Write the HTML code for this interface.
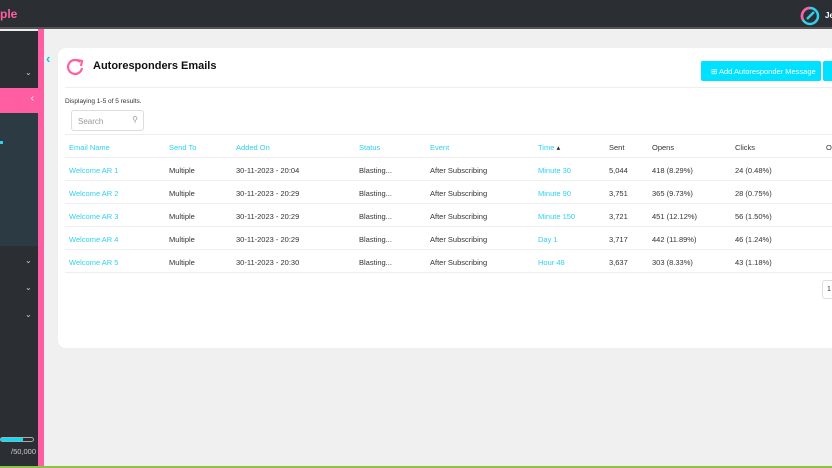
<html><head><style>
*{margin:0;padding:0;box-sizing:border-box}
body{width:832px;height:468px;overflow:hidden;background:#f0f0f0;font-family:"Liberation Sans",sans-serif;position:relative}
.top{position:absolute;left:0;top:0;width:832px;height:29px;background:#2b2e33;border-bottom:2px solid #555}
.logo{position:absolute;left:0;top:7px;color:#ff5fa2;font-weight:bold;font-size:12px}
.side{position:absolute;left:0;top:31px;width:38px;height:437px;background:#2b2e33}
.pinkstrip{position:absolute;left:38px;top:29px;width:6px;height:439px;background:#ff5fa2}
.prow{position:absolute;left:0;top:88px;width:44px;height:25px;background:#ff5fa2;color:#fff;font-size:10px;text-align:right;padding:5px 10px}
.sub{position:absolute;left:0;top:113px;width:38px;height:133px;background:#2c3a44}
.chev{position:absolute;left:25px;color:#ccc;font-size:8px}
.card{position:absolute;left:58px;top:48px;width:800px;height:300px;background:#fff;border-radius:8px}
h1{position:absolute;left:93px;top:60px;font-size:11px;font-weight:bold;color:#111}
.btn{position:absolute;left:701px;top:61px;width:120px;height:20px;background:#00e0ff;color:#fff;font-size:7.5px;border-radius:2px;padding:6px 0 0 10px;white-space:nowrap;overflow:hidden}
.btn2{position:absolute;left:823px;top:61px;width:20px;height:20px;background:#00e0ff;border-radius:2px}
.hr{position:absolute;left:65px;height:1px;background:#eee;width:767px}
.t{position:absolute;font-size:7.5px;color:#333;white-space:nowrap}
.b{color:#2fd0f0}
.srch{position:absolute;left:71px;top:110px;width:73px;height:21px;border:1px solid #ddd;border-radius:3px;font-size:8px;color:#999;padding:6px 0 0 6px}
</style></head><body>
<div class="top"><div class="logo">ple</div>
<svg style="position:absolute;left:800px;top:6px" width="20" height="20"><circle cx="10" cy="10" r="8" fill="none" stroke="#2fd0f0" stroke-width="2.5"/><path d="M3 14 A8 8 0 0 1 10 2" stroke="#ff5fa2" stroke-width="2.5" fill="none"/><path d="M7 13 L14 6" stroke="#2fd0f0" stroke-width="2.5"/></svg>
<div style="position:absolute;left:825px;top:11px;color:#fff;font-size:8px;font-weight:bold">Je</div></div>
<div class="side"></div><div class="pinkstrip"></div><div class="sub"></div>
<div class="prow">‹</div>
<div class="chev" style="top:68px">⌄</div><div class="chev" style="top:256px">⌄</div><div class="chev" style="top:283px">⌄</div><div class="chev" style="top:310px">⌄</div>
<div style="position:absolute;left:0;top:141px;width:3px;height:3px;background:#2fd0f0"></div>
<div style="position:absolute;left:0;top:437px;width:34px;height:5px;border:1px solid #aaa;border-radius:3px"><div style="width:22px;height:3px;background:#00e0ff"></div></div>
<div class="t" style="left:11px;top:447px;color:#ccc">/50,000</div>
<div style="position:absolute;left:0;top:466px;width:832px;height:2px;background:#8bc34a"></div>
<div style="position:absolute;left:46px;top:51px;color:#00c8f0;font-size:13px;font-weight:bold">‹</div>
<div class="card"></div>
<svg style="position:absolute;left:65px;top:57px" width="20" height="20"><path d="M15 5 A7 7 0 1 0 17 11" stroke="#ff5fa2" stroke-width="2.2" fill="none"/><path d="M12 3 L17 4 L16 9" stroke="#ff5fa2" stroke-width="2.2" fill="none"/></svg>
<h1>Autoresponders Emails</h1>
<div class="btn">⊞ Add Autoresponder Message</div><div class="btn2"></div>
<div class="hr" style="top:87px"></div>
<div class="t" style="left:65px;top:98px;font-size:6.5px">Displaying 1-5 of 5 results.</div>
<div class="srch">Search<span style="position:absolute;right:5px;top:4px">⚲</span></div>
<div class="hr" style="top:134px"></div>
<div class="t b" style="left:69px;top:143px">Email Name</div><div class="t b" style="left:169px;top:143px">Send To</div><div class="t b" style="left:236px;top:143px">Added On</div><div class="t b" style="left:359px;top:143px">Status</div><div class="t b" style="left:430px;top:143px">Event</div><div class="t b" style="left:538px;top:143px">Time <span style="color:#333">▴</span></div><div class="t" style="left:609px;top:143px">Sent</div><div class="t" style="left:652px;top:143px">Opens</div><div class="t" style="left:735px;top:143px">Clicks</div><div class="t" style="left:826px;top:143px">O</div>
<div class="hr" style="top:157px"></div>
<div class="t b" style="left:69px;top:166px">Welcome AR 1</div><div class="t" style="left:169px;top:166px">Multiple</div><div class="t" style="left:236px;top:166px">30-11-2023 - 20:04</div><div class="t" style="left:359px;top:166px">Blasting...</div><div class="t" style="left:430px;top:166px">After Subscribing</div><div class="t b" style="left:538px;top:166px">Minute 30</div><div class="t" style="left:609px;top:166px">5,044</div><div class="t" style="left:652px;top:166px">418 (8.29%)</div><div class="t" style="left:735px;top:166px">24 (0.48%)</div>
<div class="hr" style="top:180px"></div>
<div class="t b" style="left:69px;top:189px">Welcome AR 2</div><div class="t" style="left:169px;top:189px">Multiple</div><div class="t" style="left:236px;top:189px">30-11-2023 - 20:29</div><div class="t" style="left:359px;top:189px">Blasting...</div><div class="t" style="left:430px;top:189px">After Subscribing</div><div class="t b" style="left:538px;top:189px">Minute 90</div><div class="t" style="left:609px;top:189px">3,751</div><div class="t" style="left:652px;top:189px">365 (9.73%)</div><div class="t" style="left:735px;top:189px">28 (0.75%)</div>
<div class="hr" style="top:203px"></div>
<div class="t b" style="left:69px;top:212px">Welcome AR 3</div><div class="t" style="left:169px;top:212px">Multiple</div><div class="t" style="left:236px;top:212px">30-11-2023 - 20:29</div><div class="t" style="left:359px;top:212px">Blasting...</div><div class="t" style="left:430px;top:212px">After Subscribing</div><div class="t b" style="left:538px;top:212px">Minute 150</div><div class="t" style="left:609px;top:212px">3,721</div><div class="t" style="left:652px;top:212px">451 (12.12%)</div><div class="t" style="left:735px;top:212px">56 (1.50%)</div>
<div class="hr" style="top:226px"></div>
<div class="t b" style="left:69px;top:235px">Welcome AR 4</div><div class="t" style="left:169px;top:235px">Multiple</div><div class="t" style="left:236px;top:235px">30-11-2023 - 20:29</div><div class="t" style="left:359px;top:235px">Blasting...</div><div class="t" style="left:430px;top:235px">After Subscribing</div><div class="t b" style="left:538px;top:235px">Day 1</div><div class="t" style="left:609px;top:235px">3,717</div><div class="t" style="left:652px;top:235px">442 (11.89%)</div><div class="t" style="left:735px;top:235px">46 (1.24%)</div>
<div class="hr" style="top:249px"></div>
<div class="t b" style="left:69px;top:258px">Welcome AR 5</div><div class="t" style="left:169px;top:258px">Multiple</div><div class="t" style="left:236px;top:258px">30-11-2023 - 20:30</div><div class="t" style="left:359px;top:258px">Blasting...</div><div class="t" style="left:430px;top:258px">After Subscribing</div><div class="t b" style="left:538px;top:258px">Hour 48</div><div class="t" style="left:609px;top:258px">3,637</div><div class="t" style="left:652px;top:258px">303 (8.33%)</div><div class="t" style="left:735px;top:258px">43 (1.18%)</div>
<div class="hr" style="top:272px"></div>
<div style="position:absolute;left:822px;top:280px;width:20px;height:19px;border:1px solid #ddd;border-radius:3px;font-size:7px;padding:5px 4px;color:#333">1</div>
</body></html>
